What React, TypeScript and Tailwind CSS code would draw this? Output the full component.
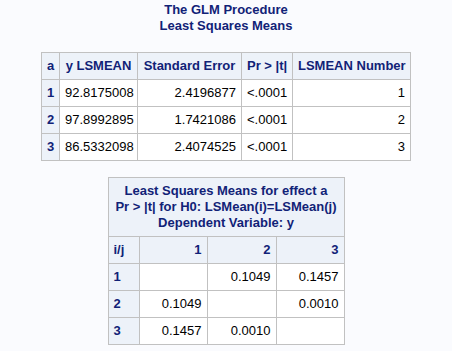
import React from "react";

const hdr = "bg-[#edf2f9] text-[#112277] font-bold px-[5px] py-[5px] leading-[16px] whitespace-nowrap";
const dat = "bg-white text-black px-[5px] py-[5px] leading-[16px] whitespace-nowrap";

export default function App() {
  const rows1 = [
    ["1", "92.8175008", "2.4196877", "<.0001", "1"],
    ["2", "97.8992895", "1.7421086", "<.0001", "2"],
    ["3", "86.5332098", "2.4074525", "<.0001", "3"],
  ];
  const rows2 = [
    ["1", "", "0.1049", "0.1457"],
    ["2", "0.1049", "", "0.0010"],
    ["3", "0.1457", "0.0010", ""],
  ];
  return (
    <div className="w-full min-h-[351px] bg-[#fafbfe] font-['Liberation_Sans',Arial,sans-serif] text-[13px] flex flex-col items-center">
      <div className="pt-[2px] text-center font-bold text-[#112277] leading-[16px]">
        <div>The GLM Procedure</div>
        <div>Least Squares Means</div>
      </div>

      <div className="mt-[18px] grid grid-cols-[17px_77px_103px_50px_117px] gap-px p-px bg-[#c1c1c1]">
        <div className={`${hdr} text-center`}>a</div>
        <div className={`${hdr} text-center`}>y LSMEAN</div>
        <div className={`${hdr} text-center`}>Standard Error</div>
        <div className={`${hdr} text-center`}>Pr &gt; |t|</div>
        <div className={`${hdr} text-center`}>LSMEAN Number</div>
        {rows1.map((r) => (
          <React.Fragment key={r[0]}>
            <div className={`${hdr} text-left`}>{r[0]}</div>
            <div className={`${dat} text-left`}>{r[1]}</div>
            <div className={`${dat} text-right`}>{r[2]}</div>
            <div className={`${dat} text-left`}>{r[3]}</div>
            <div className={`${dat} text-right`}>{r[4]}</div>
          </React.Fragment>
        ))}
      </div>

      <div className="mt-[16px] grid grid-cols-[30px_67px_68px_67px] gap-px p-px bg-[#c1c1c1]">
        <div className={`${hdr} col-span-4 text-center px-0`}>
          <div>Least Squares Means for effect a</div>
          <div>Pr &gt; |t| for H0: LSMean(i)=LSMean(j)</div>
          <div>Dependent Variable: y</div>
        </div>
        <div className={`${hdr} text-left`}>i/j</div>
        <div className={`${hdr} text-right`}>1</div>
        <div className={`${hdr} text-right`}>2</div>
        <div className={`${hdr} text-right`}>3</div>
        {rows2.map((r) => (
          <React.Fragment key={r[0]}>
            <div className={`${hdr} text-left`}>{r[0]}</div>
            <div className={`${dat} text-right`}>{r[1]}</div>
            <div className={`${dat} text-right`}>{r[2]}</div>
            <div className={`${dat} text-right`}>{r[3]}</div>
          </React.Fragment>
        ))}
      </div>
    </div>
  );
}
